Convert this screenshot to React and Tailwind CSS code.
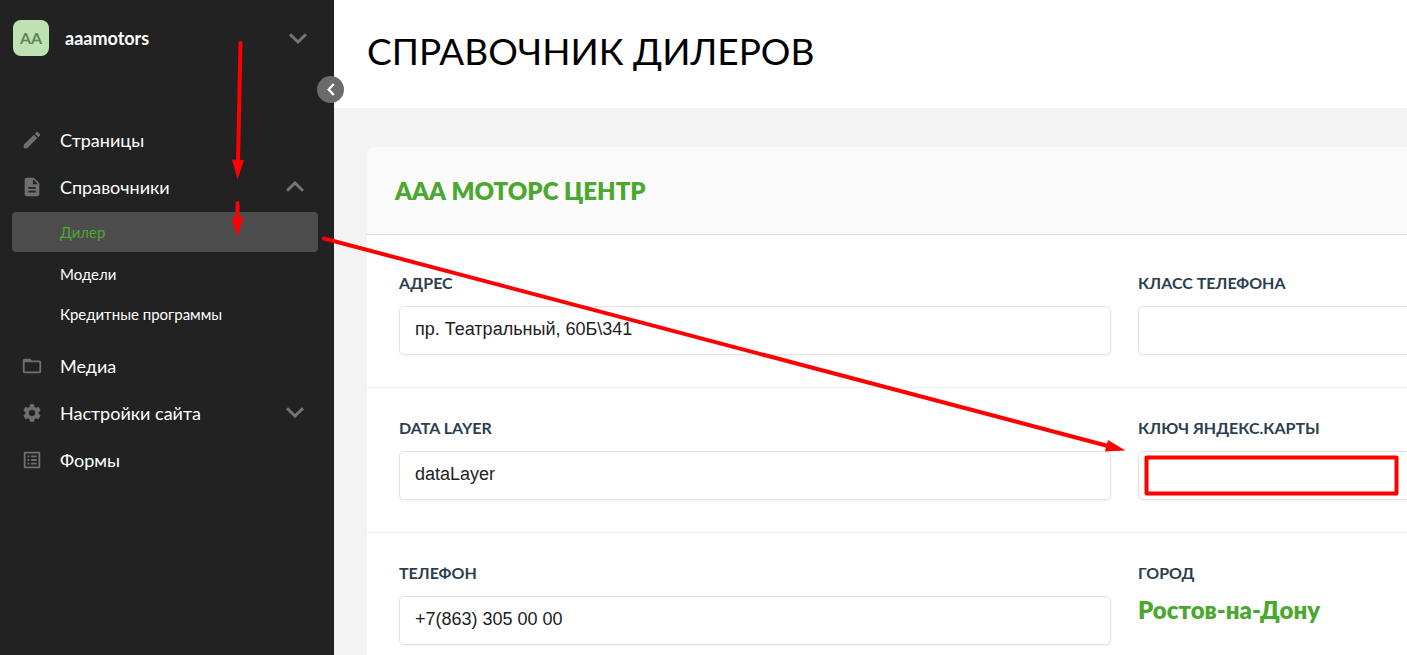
import React from "react";
import {
  MdEdit,
  MdDescription,
  MdFolderOpen,
  MdSettings,
  MdListAlt,
} from "react-icons/md";

function Chevron({ className }) {
  return (
    <svg viewBox="0 0 18 11" fill="none" stroke="currentColor" strokeWidth="3" className={className} aria-hidden="true">
      <path d="M1 1.2L9 9L17 1.2" />
    </svg>
  );
}

function MenuItem({ icon: Icon, children, chevron }) {
  return (
    <a href="#" className="flex h-[47px] items-center pl-[21px] pr-[30px] text-lg text-white">
      <Icon className="mr-[17px] size-[22px] shrink-0 text-[#6f6f6f]" />
      <span className="grow">{children}</span>
      {chevron}
    </a>
  );
}

function SubItem({ children, active }) {
  return (
    <a
      href="#"
      className={
        "mr-4 ml-3 flex h-10 items-center rounded pl-12 text-[15px] " +
        (active ? "mb-0.5 bg-[#4d4d4d] text-[#4ba82e]" : "text-white")
      }
    >
      {children}
    </a>
  );
}

function Field({ id, label, value }) {
  return (
    <div className="flex flex-col">
      <label htmlFor={id} className="mb-[15px] text-base leading-4 font-bold text-[#2c3e50]">
        {label}
      </label>
      <input
        id={id}
        type="text"
        defaultValue={value}
        className="h-[49px] w-full rounded-[5px] border border-[#e3e3e3] bg-white px-[15px] pb-0.5 font-['Liberation_Sans',Arial,sans-serif] text-lg text-[#222] shadow-[0_1px_3px_rgba(0,0,0,0.06)] outline-none"
      />
    </div>
  );
}

function Row({ children }) {
  return <div className="grid grid-cols-2 gap-[27px] border-b border-[#f0f0f0] px-8 py-8">{children}</div>;
}

function Annotations() {
  return (
    <svg
      className="pointer-events-none absolute top-0 left-0 z-20"
      width="1407"
      height="655"
      viewBox="0 0 1407 655"
      fill="none"
      stroke="#f00"
      strokeWidth="4"
      strokeLinecap="round"
      strokeLinejoin="round"
      aria-hidden="true"
    >
      <path d="M240.5 43L238 162" />
      <path d="M232 159.500L244 160L237.500 179.500Z" fill="#f00" stroke="none" />
      <path d="M237.500 203L237.500 220" />
      <path d="M231.500 217.500L243.500 217.500L237.500 237Z" fill="#f00" stroke="none" />
      <path d="M324 238.500L1108 446" />
      <path d="M1108 440L1105 451.500L1125.500 450.500Z" fill="#f00" stroke="none" />
      <rect x="1146.500" y="457.500" width="250" height="36" />
    </svg>
  );
}

export default function App() {
  return (
    <div className="relative flex min-h-screen overflow-hidden bg-[#f3f3f3] font-[Lato,sans-serif]">
      <aside className="relative z-10 w-[334px] shrink-0 bg-[#222]">
        <button type="button" className="flex w-full items-center pt-5 pr-[27px] pl-[13px] text-left text-lg text-white">
          <span className="flex size-9 items-center justify-center rounded-lg bg-[#bfe2b5] text-base font-bold text-[#5f8653]">
            AA
          </span>
          <span className="ml-4 grow font-bold">aaamotors</span>
          <Chevron className="h-[11px] w-[18px] text-[#757575]" />
        </button>
        <button
          type="button"
          aria-label="Свернуть меню"
          className="absolute top-[76px] -right-[10px] flex size-[27px] items-center justify-center rounded-full bg-[#6b6b6b] text-white"
        >
          <svg viewBox="0 0 8 14" className="h-[13px] w-2" fill="none" stroke="currentColor" strokeWidth="2.500" aria-hidden="true">
            <path d="M7 1L1.500 7L7 13" />
          </svg>
        </button>
        <nav className="pt-[60px]">
          <MenuItem icon={MdEdit}>Страницы</MenuItem>
          <MenuItem icon={MdDescription} chevron={<Chevron className="h-[11px] w-[18px] rotate-180 text-[#757575]" />}>
            Справочники
          </MenuItem>
          <div className="pt-0.5 pb-2">
            <SubItem active>Дилер</SubItem>
            <SubItem>Модели</SubItem>
            <SubItem>Кредитные программы</SubItem>
          </div>
          <MenuItem icon={MdFolderOpen}>Медиа</MenuItem>
          <MenuItem icon={MdSettings} chevron={<Chevron className="h-[11px] w-[18px] text-[#757575]" />}>
            Настройки сайта
          </MenuItem>
          <MenuItem icon={MdListAlt}>Формы</MenuItem>
        </nav>
      </aside>

      <main className="min-w-0 grow">
        <header className="flex h-[108px] items-center bg-white px-[33px] pb-1.5">
          <h1 className="text-[37px] text-black">СПРАВОЧНИК ДИЛЕРОВ</h1>
        </header>
        <section className="mt-[39px] ml-[33px] min-w-[1515px] rounded-lg bg-white">
          <div className="flex h-[88px] items-center rounded-t-lg border-b border-[#d9d9d9] bg-[#fafafa] px-7">
            <h2 className="text-2xl font-extrabold text-[#4ba82e]">ААА МОТОРС ЦЕНТР</h2>
          </div>
          <div className="pt-2">
            <Row>
              <Field id="address" label="АДРЕС" value="пр. Театральный, 60Б\341" />
              <Field id="phone-class" label="КЛАСС ТЕЛЕФОНА" value="" />
            </Row>
            <Row>
              <Field id="data-layer" label="DATA LAYER" value="dataLayer" />
              <Field id="map-key" label="КЛЮЧ ЯНДЕКС.КАРТЫ" value="" />
            </Row>
            <Row>
              <Field id="phone" label="ТЕЛЕФОН" value="+7(863) 305 00 00" />
              <div>
                <h3 className="text-base leading-4 font-bold text-[#2c3e50]">ГОРОД</h3>
                <p className="mt-[13px] text-2xl font-extrabold text-[#4ba82e]">Ростов-на-Дону</p>
              </div>
            </Row>
          </div>
        </section>
      </main>
      <Annotations />
    </div>
  );
}
